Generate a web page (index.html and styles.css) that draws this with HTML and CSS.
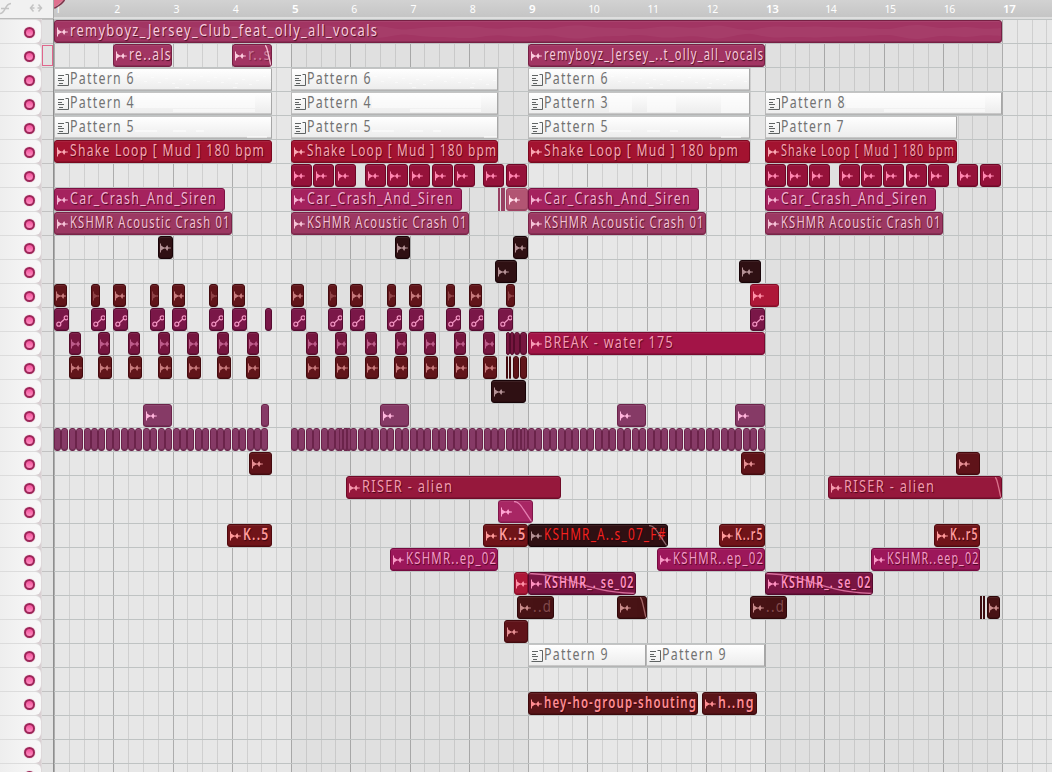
FILE: index.html
```html
<!DOCTYPE html>
<html lang="en">
<head>
  <meta charset="UTF-8">
  <meta name="viewport" content="width=device-width, initial-scale=1.0">
  <title>Playlist</title>
  <link rel="stylesheet" href="styles.css">
</head>
<body>
  <!-- Icons -->
  <svg class="sprite" width="0" height="0">
    <symbol id="audio" viewBox="0 0 11 10">
      <path d="M0.5 0.5V9.5" stroke="currentColor" fill="none"/>
      <path d="M0.5 2L4.6 5L0.5 8ZM5.2 5L7.2 2L8.6 5L7.2 8Z" fill="currentColor"/>
      <path d="M0 5H10.8" stroke="currentColor" stroke-width="1.2" fill="none"/>
    </symbol>
    <symbol id="pattern" viewBox="0 0 12 12">
      <path d="M1 1.5H7M1 4.5H5M1 6.5H7M2 9.5H6" stroke="currentColor" fill="none"/>
      <path d="M8.5 0.5H11.5V11.5H0.5" stroke="currentColor" fill="none"/>
    </symbol>
    <symbol id="auto" viewBox="0 0 13 12">
      <path d="M4.3 7.9L8.7 4.1" stroke="currentColor" stroke-width="1.3"/>
      <circle cx="2.8" cy="9.2" r="2" stroke="currentColor" stroke-width="1.2" fill="none"/>
      <circle cx="10.2" cy="2.8" r="2" stroke="currentColor" stroke-width="1.2" fill="none"/>
    </symbol>
  </svg>

  <div class="playlist">
    <!-- Ruler -->
    <div class="ruler">
      <div class="tools">
        <svg width="13" height="14" viewBox="0 0 13 14"><path d="M0 12.5C6 12.5 4 3 11 2.5M1 7.5H9" /></svg>
        <svg width="14" height="10" viewBox="0 0 14 10"><path d="M1.5 5H5.5M8.5 5H12.5M4.5 1.5L1.5 5L4.5 8.5M9.5 1.5L12.5 5L9.5 8.5"/></svg>
      </div>
      <div class="bars" id="bars">
        <svg class="playhead" width="12" height="9" viewBox="0 0 12 9"><path d="M0 0H10L0 8Z" fill="#e0708f"/><path d="M10.5 0C8 4 4 6 0.3 8.3" fill="none" stroke="#7c3048" stroke-width="1.5"/></svg>
      </div>
    </div>

    <!-- Tracks -->
    <div class="tracks" id="tracks"></div>
  </div>

  <script src="script.js"></script>
</body>
</html>
```

FILE: styles.css
```css
* {
  box-sizing: border-box;
}
body {
  margin: 0;
  height: 772px;
  overflow: hidden;
  background: #e7e7e7;
  font-family: "Noto Sans", "Open Sans", sans-serif;
}
.sprite {
  position: absolute;
}
.playlist {
  width: 1052px;
  height: 772px;
  overflow: hidden;
}

/* ruler */
.ruler {
  display: flex;
  height: 19px;
}
.tools {
  display: flex;
  align-items: center;
  justify-content: space-between;
  width: 54px;
  height: 19px;
  padding: 0 10px 3px 0;
  background: #f1f1f1;
  border-right: 1px solid #aaa;
  border-bottom: 1px solid #bbb;
}
.tools svg {
  fill: none;
  stroke: #c4c4c4;
  stroke-width: 1.5;
}
.bars {
  position: relative;
  flex: 1;
  height: 19px;
  background: linear-gradient(#d2d2d2, #c5c5c5 17px, #dedede 17px);
}
.bar {
  position: absolute;
  top: 1px;
  padding-left: 1px;
  font-size: 10.5px;
  line-height: 16px;
  letter-spacing: -0.4px;
  color: #fff;
}
.bar.major {
  font-size: 11.5px;
  font-weight: 600;
}
.playhead {
  position: absolute;
  left: 0;
  top: 0;
}

/* track rows */
.track {
  display: flex;
  height: 24px;
}
.head {
  width: 54px;
  height: 24px;
  border-right: 1px solid #8e8e8e;
  background: linear-gradient(#c2c2c2, #c2c2c2) 42px 0 / 12px 1px no-repeat, linear-gradient(90deg, #d9cfd2 41px, #e3e3e3 42px);
}
.name {
  display: flex;
  align-items: center;
  justify-content: flex-end;
  width: 41px;
  height: 24px;
  padding-right: 6px;
  padding-top: 1px;
  border-top: 1px solid #dcdcdc;
  border-radius: 0 6px 6px 0;
  background: linear-gradient(90deg, #eeeeee, #f8f8f8);
}
.led {
  width: 11px;
  height: 11px;
  border: 2px solid #9c2457;
  border-radius: 50%;
  background: linear-gradient(#f2509a, #ff92c4);
  box-shadow: 0 0 1px #c56c90;
}
.picker {
  position: absolute;
  left: 42px;
  top: 45px;
  width: 11px;
  height: 21px;
  border: 1px solid #e0668c;
}
.lane {
  position: relative;
  flex: 1;
  height: 24px;
  border-top: 1px solid #bfc3c3;
  background:
    repeating-linear-gradient(90deg, rgba(0, 0, 0, 0.17) 0, rgba(0, 0, 0, 0.17) 1px, transparent 1px, transparent 59.25px),
    repeating-linear-gradient(90deg, rgba(0, 0, 0, 0.1) 0, rgba(0, 0, 0, 0.1) 1px, transparent 1px, transparent 14.8125px),
    repeating-linear-gradient(90deg, #e7e7e7 0, #e7e7e7 237px, #e0e0e0 237px, #e0e0e0 474px);
}

/* clips */
.clip {
  position: absolute;
  top: 0;
  height: 23px;
  overflow: hidden;
  border: 1px solid;
  border-radius: 3px;
  white-space: nowrap;
  box-shadow: inset 0 1px 0 rgba(255, 255, 255, 0.07), inset 0 -1px 0 rgba(0, 0, 0, 0.15);
}
.clip .icon {
  position: absolute;
  left: 2px;
  top: 5.5px;
  width: 11px;
  height: 10px;
}
.clip .label {
  position: absolute;
  left: 15px;
  top: -1px;
  font-size: 15.5px;
  line-height: 20px;
  letter-spacing: 1.6px;
  transform-origin: 0 0;
  text-shadow: 1px 1px 1px rgba(40, 0, 15, 0.75);
}
.clip .fade,
.clip .wave {
  position: absolute;
  right: 0;
  top: 0;
  height: 21px;
  fill: none;
  stroke: currentColor;
  stroke-width: 1.3;
  opacity: 0.7;
}
.clip .wave {
  left: 0;
  width: 100%;
  stroke: none;
  fill: currentColor;
  opacity: 0.05;
}
.clip.narrow .icon {
  left: 1px;
}
.clip.dim .icon,
.clip.dim .label {
  opacity: 0.45;
}
.clip.dim .fade {
  opacity: 0.9;
}
.clip.vocal.dim .icon {
  opacity: 1;
}
.clip.strong .label {
  font-weight: 600;
}
.clip.hot .label {
  color: #f3231f;
}

.vocal { background: #a23563; border-color: #772044; color: #fbcbdd; }
.shake { background: #a31330; border-color: #7b0920; color: #f9a7b2; }
.hit { background: #95123a; border-color: #6d0726; color: #ff86b0; }
.car { background: #a5225e; border-color: #7c1243; color: #f4b2d2; }
.crash { background: #9c3862; border-color: #7a2448; color: #f6c3d7; }
.ghost { background: #b25573; border-color: #a04263; color: #ffdce8; }
.black { background: #2f1013; border-color: #180408; color: #b49195; }
.kick { background: #61151a; border-color: #430a0e; color: #c77a7c; }
.red { background: #ae1738; border-color: #850c26; color: #ff91a8; }
.auto { background: #7a1748; border-color: #560b30; color: #f193c1; }
.snare { background: #76163f; border-color: #560b2b; color: #bd5c8a; }
.break { background: #a31447; border-color: #780a30; color: #f79bb5; }
.hat { background: #863a66; border-color: #6b234a; color: #ffb5dc; }
.wine { background: #5f1319; border-color: #440a0e; color: #e58f93; }
.riser { background: #96183c; border-color: #700b28; color: #f59aae; }
.pink { background: #a82764; border-color: #80164a; color: #ffa6d3; }
.blood { background: #701419; border-color: #500a0e; color: #ff9a9a; }
.sweep { background: #9c175a; border-color: #760b40; color: #f79ac6; }
.plum { background: #7a1643; border-color: #550a2d; color: #ff92c1; }
.brown { background: #481315; border-color: #2f080a; color: #c98b8b; }
.shout { background: #5a1418; border-color: #3e0a0d; color: #ff8d92; }
.thin { background: #a04263; border-color: #984062; border-radius: 0; }
.slit { background: #3c0c10; border-color: #3c0c10; border-radius: 0; }

/* pattern clips */
.pat {
  background: linear-gradient(#ffffff, #f6f6f6 45%, #ececec);
  border-color: #c4c4c4 #a7a7a7 #b4b4b4 #b9b9b9;
  border-radius: 1px;
  color: #5f6363;
}
.pat .icon {
  top: 5px;
  width: 12px;
  height: 12px;
}
.pat .label {
  text-shadow: none;
  color: #727272;
}
.pat .notes {
  position: absolute;
  right: 0;
  top: 0;
  height: 21px;
  fill: #fff;
  opacity: 0.55;
}
```

FILE: script.js
```javascript
// bar 1 starts at x = 54, one bar is 59.25px wide
const LEFT = 54;
const BAR = 59.25;
const ROWS = 32;

// [row, type, start, end, icon, label, label width, extra class]
const clips = [
  [0, 'vocal', 54, 1002, 'audio', 'remyboyz_Jersey_Club_feat_olly_all_vocals', 307, 'wavy'],
  [1, 'vocal', 113, 172, 'audio', 're..als', 41],
  [1, 'vocal', 232, 272, 'audio', 'r..s', 22, 'dim fade'],
  [1, 'vocal', 528, 765, 'audio', 'remyboyz_Jersey_..t_olly_all_vocals', 219],
  [2, 'pat', 54, 272, 'pattern', 'Pattern 6', 63, 'dots'],
  [2, 'pat', 291, 498, 'pattern', 'Pattern 6', 63, 'dots'],
  [2, 'pat', 528, 750, 'pattern', 'Pattern 6', 63, 'dots'],
  [3, 'pat', 54, 272, 'pattern', 'Pattern 4', 63, 'long'],
  [3, 'pat', 291, 498, 'pattern', 'Pattern 4', 63, 'long'],
  [3, 'pat', 528, 750, 'pattern', 'Pattern 3', 63, 'blocks'],
  [3, 'pat', 765, 1002, 'pattern', 'Pattern 8', 63, 'long'],
  [4, 'pat', 54, 272, 'pattern', 'Pattern 5', 63, 'steps'],
  [4, 'pat', 291, 498, 'pattern', 'Pattern 5', 63, 'steps'],
  [4, 'pat', 528, 750, 'pattern', 'Pattern 5', 63, 'steps'],
  [4, 'pat', 765, 957, 'pattern', 'Pattern 7', 62],
  [5, 'shake', 54, 272, 'audio', 'Shake Loop [ Mud ] 180 bpm', 194],
  [5, 'shake', 291, 498, 'audio', 'Shake Loop [ Mud ] 180 bpm', 189],
  [5, 'shake', 528, 750, 'audio', 'Shake Loop [ Mud ] 180 bpm', 194],
  [5, 'shake', 765, 957, 'audio', 'Shake Loop [ Mud ] 180 bpm', 173],
  [7, 'thin', 498, 500], [7, 'thin', 501, 502], [7, 'thin', 503, 504],
  [7, 'ghost', 506, 528, 'audio'],
  [10, 'black', 495, 517, 'audio'],
  [10, 'black', 739, 761, 'audio'],
  [11, 'red', 750, 779, 'audio'],
  [12, 'auto', 265, 272],
  [12, 'auto', 750, 765, 'auto'],
  [13, 'snare', 506, 510], [13, 'snare', 510, 514], [13, 'snare', 514, 520], [13, 'snare', 520, 527],
  [13, 'break', 528, 765, 'audio', 'BREAK - water 175', 128],
  [14, 'kick', 506, 508], [14, 'kick', 509, 511], [14, 'kick', 513, 519], [14, 'kick', 520, 527],
  [15, 'black', 491, 526, 'audio'],
  [16, 'hat', 143, 172, 'audio'],
  [16, 'hat', 261, 269],
  [16, 'hat', 380, 409, 'audio'],
  [16, 'hat', 617, 646, 'audio'],
  [16, 'hat', 735, 765, 'audio'],
  [18, 'wine', 249, 272, 'audio'],
  [18, 'wine', 741, 765, 'audio'],
  [18, 'wine', 956, 980, 'audio'],
  [19, 'riser', 346, 561, 'audio', 'RISER - alien', 90],
  [19, 'riser', 828, 1002, 'audio', 'RISER - alien', 90, 'fade'],
  [20, 'pink', 498, 533, 'audio', '', 0, 'fade wide'],
  [21, 'blood', 227, 272, 'audio', 'K..5', 25, 'strong'],
  [21, 'blood', 483, 528, 'audio', 'K..5', 26, 'strong'],
  [21, 'black', 528, 668, 'audio', 'KSHMR_A..s_07_F#', 121, 'hot fade wide'],
  [21, 'blood', 719, 765, 'audio', 'K..r5', 27, 'strong'],
  [21, 'blood', 934, 980, 'audio', 'K..r5', 27, 'strong'],
  [22, 'sweep', 390, 498, 'audio', 'KSHMR..ep_02', 90],
  [22, 'sweep', 657, 765, 'audio', 'KSHMR..ep_02', 90],
  [22, 'sweep', 871, 980, 'audio', 'KSHMR..eep_02', 91],
  [23, 'red', 514, 528, 'audio'],
  [23, 'plum', 528, 636, 'audio', 'KSHMR_. se_02', 89, 'strong fade full'],
  [23, 'plum', 765, 873, 'audio', 'KSHMR_. se_02', 89, 'strong fade full'],
  [24, 'brown', 517, 554, 'audio', '..d', 18, 'dimlabel'],
  [24, 'brown', 617, 647, 'audio', '', 0, 'fade'],
  [24, 'brown', 750, 787, 'audio', '..d', 18, 'dimlabel'],
  [24, 'slit', 980, 982], [24, 'slit', 983, 985],
  [24, 'brown', 987, 1000, 'audio'],
  [25, 'wine', 504, 528, 'audio'],
  [26, 'pat', 528, 646, 'pattern', 'Pattern 9', 63],
  [26, 'pat', 646, 765, 'pattern', 'Pattern 9', 63],
  [28, 'shout', 528, 698, 'audio', 'hey-ho-group-shouting', 152, 'strong'],
  [28, 'shout', 702, 757, 'audio', 'h..ng', 35, 'strong']
];

// same clip repeated on a row
function repeat(row, type, width, icon, starts, extra) {
  starts.forEach(x => clips.push([row, type, x, x + width, icon, '', 0, extra]));
}

const hits = [291, 313, 335, 365, 387, 409, 432, 454, 483, 506];
repeat(6, 'hit', 21, 'audio', hits);
repeat(6, 'hit', 21, 'audio', hits.map(x => x + 474));

[54, 291, 528, 765].forEach(x => {
  clips.push([7, 'car', x, x + 171, 'audio', 'Car_Crash_And_Siren', 145]);
  clips.push([8, 'crash', x, x + 178, 'audio', 'KSHMR Acoustic Crash 01', 159]);
});

repeat(9, 'black', 15, 'audio', [158, 395, 513]);
repeat(11, 'kick', 13, 'audio', [54, 113, 172, 232, 291, 350, 409, 469]);
repeat(11, 'kick', 9, 'audio', [91, 150, 209, 328, 387, 446, 506], 'dim');
repeat(12, 'auto', 15, 'auto', [54, 91, 113, 150, 172, 209, 232, 291, 328, 350, 387, 409, 446, 469, 498]);
repeat(13, 'snare', 12, 'audio', [69, 98, 128, 158, 187, 217, 247, 306, 335, 365, 395, 424, 454, 483]);
repeat(14, 'kick', 14, 'audio', [69, 98, 128, 158, 187, 217, 246, 306, 335, 365, 394, 424, 454, 483]);

// hi-hats, eight to a bar
function hats(from, count) {
  for (let i = 0; i < count; i++) {
    const x = Math.round(from + i * BAR / 8);
    clips.push([17, 'hat', x, x + 7]);
  }
}
hats(54, 29);
hats(291, 64);
[339, 343, 347, 513, 517, 521].forEach(x => clips.push([17, 'hat', x, x + 4]));

function wave(width) {
  let top = '', bottom = '';
  for (let x = 0; x <= width; x += 4) {
    const a = 3 + 2.5 * Math.abs(Math.sin(x / 37)) + 1.5 * Math.sin(x / 9) * Math.sin(x / 61);
    top += `L${x} ${(11 - a).toFixed(1)}`;
    bottom = `L${x} ${(11 + a).toFixed(1)}` + bottom;
  }
  return `<svg class="wave" viewBox="0 0 ${width} 21" preserveAspectRatio="none"><path d="M0 11${top}${bottom}Z"/></svg>`;
}

function fade(width, extra) {
  if (extra.includes('full')) {
    return `<svg class="fade" width="${width}" height="21" viewBox="0 0 106 21" preserveAspectRatio="none"><path d="M0 0.5C45 2 50 18 106 20.5"/></svg>`;
  }
  const w = extra.includes('wide') ? 18 : 6;
  return `<svg class="fade" width="${w}" height="21" viewBox="0 0 18 21" preserveAspectRatio="none"><path vector-effect="non-scaling-stroke" d="M0 0.5C6 0.5 8 7 18 21"/></svg>`;
}

// faint note preview drawn behind the pattern name
function notes(kind, width) {
  let r = '';
  if (kind === 'dots') {
    for (let i = 0; i < 20; i++) r += `<rect x="${82 + i * 7}" y="${7 + (i * 5) % 9}" width="3" height="1"/>`;
    r += '<rect x="120" y="18" width="4" height="1"/><rect x="178" y="18" width="4" height="1"/>';
  } else if (kind === 'long') {
    r = `<rect x="80" y="2" width="${width - 96}" height="13"/><rect x="118" y="16" width="${width - 134}" height="3"/>`;
  } else if (kind === 'blocks') {
    r = '<rect x="80" y="3" width="23" height="16"/><rect x="118" y="3" width="29" height="16"/><rect x="192" y="2" width="28" height="18"/>';
  } else if (kind === 'steps') {
    r = '<rect x="80" y="13" width="22" height="2"/><rect x="118" y="13" width="13" height="2"/><rect x="141" y="13" width="8" height="2"/><rect x="192" y="19" width="20" height="2"/>';
  }
  return `<svg class="notes" width="${width}" height="21" viewBox="0 0 ${width} 21">${r}</svg>`;
}

// ruler numbers
const bars = document.getElementById('bars');
for (let i = 0; i < 17; i++) {
  const bar = document.createElement('span');
  bar.className = i % 4 === 0 && i > 0 ? 'bar major' : 'bar';
  bar.style.left = i * BAR + 'px';
  bar.textContent = i + 1;
  bars.insertBefore(bar, bars.firstChild);
}

// rows
const tracks = document.getElementById('tracks');
const lanes = [];
for (let i = 0; i < ROWS; i++) {
  const track = document.createElement('div');
  track.className = 'track';
  track.innerHTML = '<div class="head"><div class="name"><span class="led"></span></div></div><div class="lane"></div>';
  if (i === 1) track.insertAdjacentHTML('beforeend', '<div class="picker"></div>');
  tracks.appendChild(track);
  lanes.push(track.querySelector('.lane'));
}

clips.forEach(([row, type, start, end, icon, label, labelWidth, extra = '']) => {
  const width = end - start;
  const clip = document.createElement('div');
  clip.className = `clip ${type} ${extra.replace('fade', '')} ${width < 16 ? 'narrow' : ''}`;
  clip.style.left = start - LEFT + 'px';
  clip.style.width = width + 'px';
  let html = '';
  if (extra.includes('wavy')) html += wave(width);
  if (type === 'pat') html += notes(extra, width - 2);
  if (icon === 'auto') html += '<svg class="icon" style="width:13px;height:12px"><use href="#auto"/></svg>';
  else if (icon) html += `<svg class="icon"><use href="#${icon}"/></svg>`;
  if (label) html += `<span class="label">${label}</span>`;
  if (extra.includes('fade')) html += fade(width - 2, extra);
  clip.innerHTML = html;
  lanes[row].appendChild(clip);

  // squeeze the name to its slot
  const span = clip.querySelector('.label');
  if (span) {
    span.style.transform = `scaleX(${labelWidth / (span.offsetWidth - 2)})`;
    if (extra.includes('dimlabel')) span.style.opacity = 0.45;
  }
});
```
